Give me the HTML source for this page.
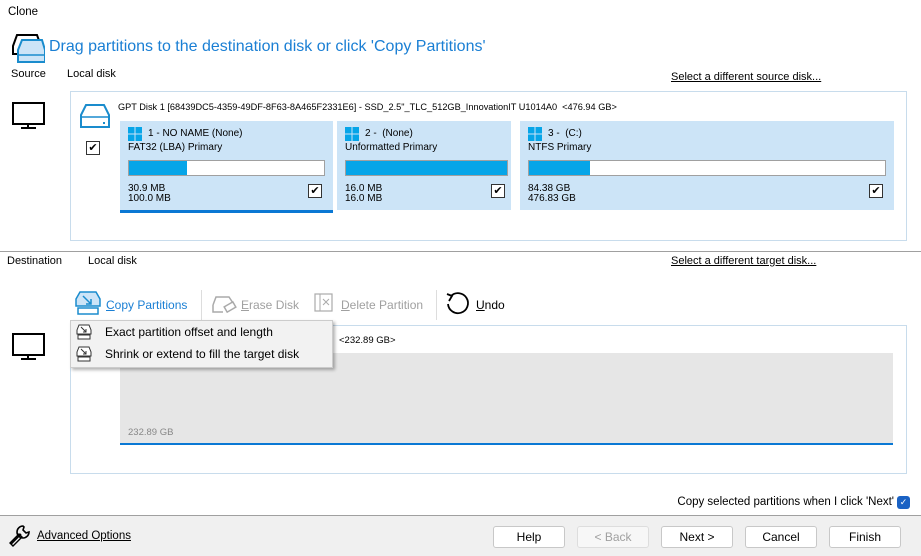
<!DOCTYPE html><html><head><style>
*{box-sizing:border-box}body{margin:0;width:921px;height:556px;background:#fff;font-family:"Liberation Sans",sans-serif;font-size:11.5px;color:#000;position:relative;overflow:hidden}
.a{position:absolute;white-space:nowrap}
.card{position:absolute;background:#cce4f7;top:121px;height:89px}
.bar{position:absolute;height:16px;border:1px solid #a0a0a0;background:#fff;top:39px;left:8px}
.bar i{display:block;height:100%;background:#06a5e8}
.cb{position:absolute;width:14px;height:14px;border:1px solid #333;background:#fff;font-size:11px;line-height:12px;text-align:center}
.t{font-size:10px}
.btn{position:absolute;top:526px;width:72px;height:22px;border:1px solid #c8c8c8;border-radius:3px;background:#fff;text-align:center;line-height:20px;font-size:12px}
u{text-decoration:underline}
</style></head><body>
<div class="a" style="left:8px;top:6px">Clone</div>
<svg class="a" style="left:11px;top:32px" width="34" height="32"><path d="M2 14 L6 3 H26 L30 14 V22 H2 Z" fill="#fff" stroke="#000" stroke-width="2"/><path d="M7 18 L11 8 H31 L34 18 V30 H7 Z" fill="#cce4f7" stroke="#1a8ccd" stroke-width="2"/><line x1="7" y1="23" x2="34" y2="23" stroke="#1a8ccd" stroke-width="1.5"/></svg>
<div class="a" style="left:49px;top:38px;font-size:16px;color:#1a7fd4">Drag partitions to the destination disk or click 'Copy Partitions'</div>
<div class="a" style="left:11px;top:68px;font-size:11px">Source</div><div class="a" style="left:67px;top:68px;font-size:11px">Local disk</div>
<div class="a" style="left:671px;top:71px;font-size:11px"><u>Select a different source disk...</u></div>
<svg class="a" style="left:12px;top:102px" width="34" height="28"><rect x="1" y="1" width="31" height="21" fill="none" stroke="#000" stroke-width="2"/><path d="M16 22v4M9 26h15" stroke="#000" stroke-width="2"/></svg>
<div class="a" style="left:70px;top:91px;width:837px;height:150px;border:1px solid #c8dcec"></div>
<svg class="a" style="left:79px;top:103px" width="32" height="26"><path d="M2 12 L7 2 H25 L30 12 V24 H2 Z" fill="#fff" stroke="#1a8ccd" stroke-width="2"/><line x1="2" y1="14" x2="30" y2="14" stroke="#1a8ccd" stroke-width="1.5"/><rect x="24" y="19" width="2" height="2" fill="#1a8ccd"/></svg>
<div class="cb" style="left:86px;top:141px">✔</div>
<div class="a" style="left:118px;top:102px;font-size:9.2px">GPT Disk 1 [68439DC5-4359-49DF-8F63-8A465F2331E6] - SSD_2.5"_TLC_512GB_InnovationIT U1014A0 &nbsp;&lt;476.94 GB&gt;</div>
<div class="card" style="left:120px;width:213px"><svg class="a" style="left:8px;top:6px" width="14" height="14"><path d="M0 0h6.5v6.5H0zM7.5 0H14v6.5H7.5zM0 7.5h6.5V14H0zM7.5 7.5H14V14H7.5z" fill="#06a5e8"/></svg><div class="a t" style="left:28px;top:7px">1 - NO NAME (None)</div><div class="a t" style="left:8px;top:21px">FAT32 (LBA) Primary</div><div class="bar" style="width:197px"><i style="width:58px"></i></div><div class="a t" style="left:8px;top:63px;line-height:10px">30.9 MB<br>100.0 MB</div><div class="cb" style="left:188px;top:63px">✔</div></div>
<div class="a" style="left:120px;top:210px;width:213px;height:3px;background:#0a78d4"></div>
<div class="card" style="left:337px;width:174px"><svg class="a" style="left:8px;top:6px" width="14" height="14"><path d="M0 0h6.5v6.5H0zM7.5 0H14v6.5H7.5zM0 7.5h6.5V14H0zM7.5 7.5H14V14H7.5z" fill="#06a5e8"/></svg><div class="a t" style="left:28px;top:7px">2 - &nbsp;(None)</div><div class="a t" style="left:8px;top:21px">Unformatted Primary</div><div class="bar" style="width:163px"><i style="width:100%"></i></div><div class="a t" style="left:8px;top:63px;line-height:10px">16.0 MB<br>16.0 MB</div><div class="cb" style="left:154px;top:63px">✔</div></div>
<div class="card" style="left:520px;width:374px"><svg class="a" style="left:8px;top:6px" width="14" height="14"><path d="M0 0h6.5v6.5H0zM7.5 0H14v6.5H7.5zM0 7.5h6.5V14H0zM7.5 7.5H14V14H7.5z" fill="#06a5e8"/></svg><div class="a t" style="left:28px;top:7px">3 - &nbsp;(C:)</div><div class="a t" style="left:8px;top:21px">NTFS Primary</div><div class="bar" style="width:358px"><i style="width:61px"></i></div><div class="a t" style="left:8px;top:63px;line-height:10px">84.38 GB<br>476.83 GB</div><div class="cb" style="left:349px;top:63px">✔</div></div>
<div class="a" style="left:0;top:251px;width:921px;height:1px;background:#a0a0a0"></div>
<div class="a" style="left:7px;top:255px;font-size:11px">Destination</div><div class="a" style="left:88px;top:255px;font-size:11px">Local disk</div>
<div class="a" style="left:671px;top:255px;font-size:11px"><u>Select a different target disk...</u></div>
<svg class="a" style="left:75px;top:290px" width="26" height="26"><path d="M1 9 L5 2 H21 L25 9 V16 H1 Z" fill="#cce4f7" stroke="#1a8ccd" stroke-width="1.5"/><path d="M8 6l8 8M16 9v5h-5" stroke="#1a8ccd" stroke-width="1.5" fill="none"/><rect x="3" y="18" width="20" height="6" fill="#fff" stroke="#1a8ccd" stroke-width="1.5"/></svg>
<div class="a" style="left:106px;top:298px;color:#1a7fd4;font-size:12px"><u>C</u>opy Partitions</div>
<div class="a" style="left:201px;top:290px;width:1px;height:30px;background:#ddd"></div>
<svg class="a" style="left:211px;top:295px" width="26" height="20"><path d="M2 10 L5 2 H18 L22 8 M2 10 V17 H12" fill="none" stroke="#aaa" stroke-width="1.5"/><rect x="14" y="9" width="10" height="6" transform="rotate(-30 19 12)" fill="none" stroke="#aaa" stroke-width="1.5"/></svg>
<div class="a" style="left:241px;top:298px;color:#a0a0a0;font-size:12px"><u>E</u>rase Disk</div>
<svg class="a" style="left:314px;top:293px" width="20" height="20"><rect x="1" y="1" width="17" height="17" fill="none" stroke="#aaa" stroke-width="1.2"/><line x1="6" y1="1" x2="6" y2="18" stroke="#aaa"/><path d="M9 6l6 6M15 6l-6 6" stroke="#aaa"/></svg>
<div class="a" style="left:341px;top:298px;color:#a0a0a0;font-size:12px"><u>D</u>elete Partition</div>
<div class="a" style="left:436px;top:290px;width:1px;height:30px;background:#ddd"></div>
<svg class="a" style="left:445px;top:291px" width="26" height="26"><path d="M6 5 A10 10 0 1 1 3 13" fill="none" stroke="#000" stroke-width="1.8"/><path d="M2 3 L7 5 L4 10" fill="none" stroke="#000" stroke-width="1.8"/></svg>
<div class="a" style="left:476px;top:298px;font-size:12px"><u>U</u>ndo</div>
<svg class="a" style="left:12px;top:333px" width="34" height="28"><rect x="1" y="1" width="31" height="21" fill="none" stroke="#000" stroke-width="2"/><path d="M16 22v4M9 26h15" stroke="#000" stroke-width="2"/></svg>
<div class="a" style="left:70px;top:325px;width:837px;height:149px;border:1px solid #c8dcec"></div>
<div class="a" style="left:339px;top:335px;font-size:9.5px">&lt;232.89 GB&gt;</div>
<div class="a" style="left:120px;top:353px;width:773px;height:90px;background:#e6e6e6"></div>
<div class="a" style="left:120px;top:443px;width:773px;height:2px;background:#0a78d4"></div>
<div class="a" style="left:128px;top:427px;font-size:9.5px;color:#888">232.89 GB</div>
<div class="a" style="left:70px;top:320px;width:263px;height:48px;background:#f2f2f2;border:1px solid #ccc;box-shadow:2px 2px 3px rgba(0,0,0,.3)"></div>
<svg class="a" style="left:76px;top:324px" width="16" height="16"><path d="M1 6 L3 1 H13 L15 6 V10 H1 Z" fill="#fff" stroke="#333"/><path d="M5 3l5 5M10 5v3H7" stroke="#333" fill="none"/><rect x="2" y="11" width="12" height="4" fill="#fff" stroke="#333"/></svg>
<svg class="a" style="left:76px;top:346px" width="16" height="16"><path d="M1 6 L3 1 H13 L15 6 V10 H1 Z" fill="#fff" stroke="#333"/><path d="M5 3l5 5M10 5v3H7" stroke="#333" fill="none"/><rect x="2" y="11" width="12" height="4" fill="#fff" stroke="#333"/></svg>
<div class="a" style="left:105px;top:325px;font-size:12px">Exact partition offset and length</div>
<div class="a" style="left:105px;top:347px;font-size:12px">Shrink or extend to fill the target disk</div>
<div class="a" style="right:27px;top:496px;font-size:11.5px">Copy selected partitions when I click 'Next'</div>
<div class="a" style="left:897px;top:496px;width:13px;height:13px;border-radius:3px;background:#1a62c4;color:#fff;font-size:9px;text-align:center;line-height:13px">✓</div>
<div class="a" style="left:0;top:515px;width:921px;height:41px;background:#f0f0f0;border-top:1px solid #a0a0a0"></div>
<svg class="a" style="left:8px;top:523px" width="24" height="24"><path d="M3 21 L13 11 M15 3 a6 6 0 1 0 6 6 l-3 1 -3 -3 1 -3z" fill="none" stroke="#000" stroke-width="1.6"/><path d="M2 20l3 3 9-9-3-3z" fill="none" stroke="#000" stroke-width="1.4"/></svg>
<div class="a" style="left:37px;top:530px"><u>Advanced Options</u></div>
<div class="btn" style="left:493px">Help</div>
<div class="btn" style="left:577px;color:#a0a0a0;border-color:#ddd;background:#f7f7f7">&lt; Back</div>
<div class="btn" style="left:661px">Next &gt;</div>
<div class="btn" style="left:745px">Cancel</div>
<div class="btn" style="left:829px">Finish</div>
</body></html>
